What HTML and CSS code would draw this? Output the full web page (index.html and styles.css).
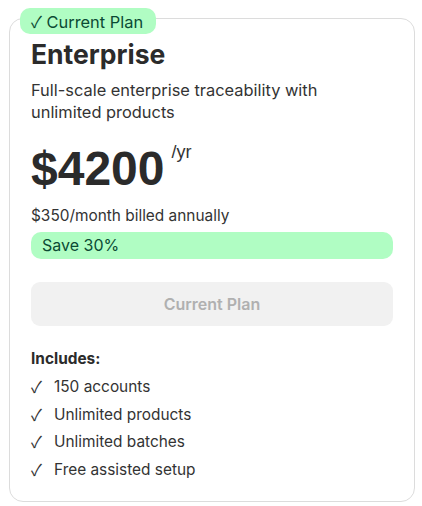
FILE: index.html
```html
<!DOCTYPE html>
<html>
<head>
<meta charset="utf-8">
<link rel="stylesheet" href="styles.css">
</head>
<body>
<div class="page">
  <div class="card">
    <div class="badge"><span class="tick">✓</span> Current Plan</div>
    <h2 class="title">Enterprise</h2>
    <p class="desc">Full-scale enterprise traceability with unlimited products</p>
    <div class="price-row">
      <span class="price">$4200</span>
      <span class="period">/yr</span>
    </div>
    <p class="billed">$350/month billed annually</p>
    <div class="save">Save 30%</div>
    <button class="cta" disabled>Current Plan</button>
    <p class="includes">Includes:</p>
    <ul class="features">
      <li><span class="check">✓</span>150 accounts</li>
      <li><span class="check">✓</span>Unlimited products</li>
      <li><span class="check">✓</span>Unlimited batches</li>
      <li><span class="check">✓</span>Free assisted setup</li>
    </ul>
  </div>
</div>
</body>
</html>
```
FILE: styles.css
```css
* { box-sizing: border-box; }
html, body { margin: 0; padding: 0; background: #fff; }
body {
  font-family: Inter, "Noto Sans", sans-serif;
  color: #2d2d2d;
}
.page {
  padding: 18px 8px 6px 9px;
}
.card {
  position: relative;
  width: 406px;
  border: 1px solid #dcdcdc;
  border-radius: 14px;
  padding: 19px 21px 18px 21px;
  display: flex;
  flex-direction: column;
}
.badge {
  position: absolute;
  top: -11px;
  left: 10px;
  background: #b0fdc3;
  color: #0b4a34;
  font-size: 16.4px;
  line-height: 26px;
  height: 26px;
  padding: 0 13px 0 11px;
  border-radius: 10px;
}
.tick, .check {
  font-family: "Noto Sans CJK SC", "DejaVu Sans", sans-serif;
  font-weight: 400;
}
.tick { font-size: 16px; }
.title {
  margin: 0;
  font-size: 26.5px;
  line-height: 32px;
  font-weight: 700;
  color: #2b2b2b;
}
.desc {
  margin: 9px 0 0 0;
  max-width: 330px;
  font-size: 16.4px;
  line-height: 22px;
  color: #333;
}
.price-row {
  display: flex;
  align-items: flex-start;
  margin-top: 21px;
}
.price {
  font-family: "Liberation Sans", Arial, sans-serif;
  font-weight: 700;
  font-size: 48px;
  line-height: 50px;
  color: #2b2b2b;
}
.period {
  font-family: "Liberation Sans", Arial, sans-serif;
  font-size: 18px;
  line-height: 20px;
  margin-left: 7px;
  margin-top: -2px;
  color: #333;
}
.billed {
  margin: 12px 0 0 0;
  font-size: 15.4px;
  line-height: 20px;
  color: #333;
}
.save {
  margin-top: 6px;
  height: 27px;
  line-height: 27px;
  background: #b0fdc3;
  color: #0b4a34;
  border-radius: 10px;
  padding: 0 11px;
  font-size: 16px;
}
.cta {
  margin-top: 23px;
  height: 44px;
  border: none;
  border-radius: 9px;
  background: #f1f1f1;
  color: #b0b0b0;
  font-family: Inter, "Noto Sans", sans-serif;
  font-size: 16px;
  font-weight: 600;
}
.includes {
  margin: 23px 0 0 0;
  font-size: 15.4px;
  line-height: 20px;
  font-weight: 700;
  color: #2b2b2b;
}
.features {
  list-style: none;
  margin: 4px 0 0 0;
  padding: 0;
}
.features li {
  font-size: 15.4px;
  line-height: 27.5px;
  color: #333;
  display: flex;
}
.check {
  width: 23px;
  flex: none;
  font-size: 16px;
}
```
